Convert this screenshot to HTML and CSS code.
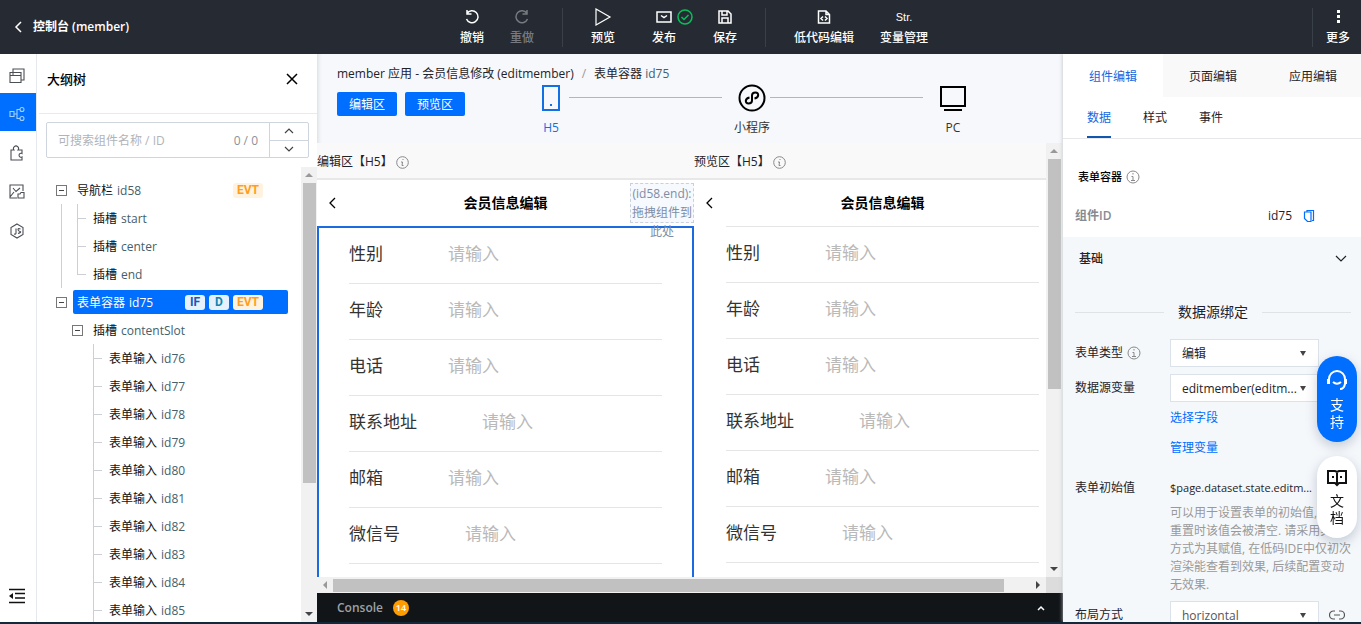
FILE: index.html
```html
<!DOCTYPE html>
<html lang="zh-CN">
<head>
<meta charset="utf-8">
<title>控制台 (member)</title>
<link rel="stylesheet" href="styles.css">
</head>
<body>
<header class="topbar">
  <a class="back" href="#"><svg width="8" height="12" viewBox="0 0 8 12"><path d="M7 1L2 6l5 5"/></svg>控制台 (member)</a>
  <nav class="tools">
    <div class="tool-group">
      <button class="tool"><svg width="16" height="16" viewBox="0 0 16 16"><path d="M3 4.500A6 6 0 1 1 2.500 10M3 1v4h4.500"/></svg>撤销</button>
      <button class="tool disabled"><svg width="16" height="16" viewBox="0 0 16 16"><path d="M13 4.500A6 6 0 1 0 13.500 10M13 1v4H8.500"/></svg>重做</button>
    </div>
    <div class="tool-group wide">
      <button class="tool"><svg width="18" height="18" viewBox="0 0 18 18"><path class="thin" d="M2 1v16l14-8z"/></svg>预览</button>
      <button class="tool"><svg width="16" height="16" viewBox="0 0 16 16"><path d="M1 3h14v10H1zM5 6.500l3 2 3-2"/></svg><svg class="ok" width="16" height="16" viewBox="0 0 16 16"><circle cx="8" cy="8" r="7"/><path d="M4.500 8l2.500 2.500 4.500-4.500"/></svg>发布</button>
      <button class="tool"><svg width="16" height="16" viewBox="0 0 16 16"><path d="M2 2h9l3 3v9H2zM5 2v4h5V2M5 14V9h6v5"/></svg>保存</button>
    </div>
    <div class="tool-group">
      <button class="tool"><svg width="16" height="16" viewBox="0 0 16 16"><path d="M2.500 2H10l3.500 3.500V14h-11zM10 2v3.500h3.500M7 7.500l-2 2 2 2M9 7.500l2 2-2 2"/></svg>低代码编辑</button>
      <button class="tool"><span class="glyph">Str.</span>变量管理</button>
    </div>
  </nav>
  <div class="more"><button class="tool"><svg width="16" height="16" viewBox="0 0 16 16"><g class="dots"><rect x="7" y="1" width="3" height="3"/><rect x="7" y="6" width="3" height="3"/><rect x="7" y="11" width="3" height="3"/></g></svg>更多</button></div>
</header>

<main class="workspace">
  <nav class="rail">
    <button aria-label="页面"><svg width="16" height="16" viewBox="0 0 16 16"><path d="M4 4V1h11v11h-3M1 4.500h11v10H1zM1 7.500h11M3 6h2"/></svg></button>
    <button class="active" aria-label="大纲树"><svg width="16" height="16" viewBox="0 0 16 16"><path d="M1 5.500h4v5H1zM5 8h3M11 3.500H8v9h3"/><circle cx="13" cy="3.500" r="2"/><circle cx="13" cy="12.500" r="2"/></svg></button>
    <button aria-label="组件"><svg width="16" height="16" viewBox="0 0 16 16"><path d="M2 15V5h3a2.500 2.500 0 1 1 4 0h4v3.500a2 2 0 1 0 0 3.500v3z"/></svg></button>
    <button aria-label="素材"><svg width="16" height="16" viewBox="0 0 16 16"><path d="M8 14H1V1h13v6M4 4l3 3.500L11 4M1 13l4-5M9 10h2l1-1.500h3V14H9z"/></svg></button>
    <button aria-label="脚本"><svg width="16" height="16" viewBox="0 0 16 16"><path d="M8 1l6 3.500v7L8 15l-6-3.500v-7zM7 5.500V10q0 1.500-2 1M11.500 6Q9 5 9 6.500T11 8.500 9 10.500"/></svg></button>
    <button class="collapse" aria-label="收起"><svg width="18" height="16" viewBox="0 0 18 16"><path d="M1 1.500h16M7 5.500h10M7 10h10M1 14.500h16"/><path class="solid" d="M5 5v6L1 8z"/></svg></button>
  </nav>

  <aside class="outline">
    <div class="outline-head"><h2>大纲树</h2><button aria-label="关闭"><svg width="12" height="12" viewBox="0 0 12 12"><path d="M1 1l10 10M11 1L1 11"/></svg></button></div>
    <div class="search">
      <input type="text" aria-label="搜索组件" placeholder="可搜索组件名称 / ID">
      <span class="count">0 / 0</span>
      <div class="stepper">
        <button aria-label="上一个"><svg width="10" height="6" viewBox="0 0 10 6"><path d="M1 5l4-4 4 4"/></svg></button>
        <button aria-label="下一个"><svg width="10" height="6" viewBox="0 0 10 6"><path d="M1 1l4 4 4-4"/></svg></button>
      </div>
    </div>
    <div class="tree-area">
      <ul class="tree">
        <li><div class="row"><button class="toggle" aria-label="折叠"></button><span class="node"><b>导航栏</b> id58<span class="tags"><i class="evt">EVT</i></span></span></div>
          <ul class="guided">
            <li class="row"><span class="twig"></span><span class="node"><b>插槽</b> start</span></li>
            <li class="row"><span class="twig"></span><span class="node"><b>插槽</b> center</span></li>
            <li class="row"><span class="twig end"></span><span class="node"><b>插槽</b> end</span></li>
          </ul>
        </li>
        <li><div class="row"><button class="toggle" aria-label="折叠"></button><span class="node selected"><b>表单容器</b> id75<span class="tags"><i class="if">IF</i><i class="data">D</i><i class="evt">EVT</i></span></span></div>
          <ul>
            <li><div class="row"><button class="toggle" aria-label="折叠"></button><span class="node"><b>插槽</b> contentSlot</span></div>
              <ul>
                <li class="row"><span class="twig"></span><span class="node"><b>表单输入</b> id76</span></li>
                <li class="row"><span class="twig"></span><span class="node"><b>表单输入</b> id77</span></li>
                <li class="row"><span class="twig"></span><span class="node"><b>表单输入</b> id78</span></li>
                <li class="row"><span class="twig"></span><span class="node"><b>表单输入</b> id79</span></li>
                <li class="row"><span class="twig"></span><span class="node"><b>表单输入</b> id80</span></li>
                <li class="row"><span class="twig"></span><span class="node"><b>表单输入</b> id81</span></li>
                <li class="row"><span class="twig"></span><span class="node"><b>表单输入</b> id82</span></li>
                <li class="row"><span class="twig"></span><span class="node"><b>表单输入</b> id83</span></li>
                <li class="row"><span class="twig"></span><span class="node"><b>表单输入</b> id84</span></li>
                <li class="row"><span class="twig"></span><span class="node"><b>表单输入</b> id85</span></li>
              </ul>
            </li>
          </ul>
        </li>
      </ul>
      <div class="vbar"><span class="arrow up dim"></span><span class="thumb"></span><span class="arrow down"></span></div>
    </div>
  </aside>

  <section class="stage">
    <div class="stage-head">
      <div class="crumbs"><span>member 应用 - 会员信息修改 (editmember)</span><span class="slash">/</span><span>表单容器 <em>id75</em></span></div>
      <div class="stage-tools">
        <button class="primary">编辑区</button>
        <button class="primary">预览区</button>
        <div class="steps">
          <button class="step current"><svg width="28" height="28" viewBox="0 0 28 28"><path d="M6 2h16v24H6z"/><path d="M13 21h2"/></svg>H5</button>
          <span class="link-line"></span>
          <button class="step"><svg width="28" height="28" viewBox="0 0 28 28"><circle cx="14" cy="14" r="12.500"/><path d="M11.500 13.500c-5 1-4.500 6-1 6 2.500 0 3.500-1.500 3.500-3v-5c0-1.500 1-3 3.500-3 3.500 0 4 5-1 6"/></svg>小程序</button>
          <span class="link-line"></span>
          <button class="step"><svg width="28" height="28" viewBox="0 0 28 28"><path d="M2 3h24v19H2zM5 26h18"/></svg>PC</button>
        </div>
      </div>
    </div>
    <div class="stage-body">
      <div class="canvas">
        <section class="pane">
          <h3>编辑区【H5】<svg class="info" width="13" height="13" viewBox="0 0 13 13"><circle cx="6.500" cy="6.500" r="5.800"/><path d="M7 3v1M5 6h1.500L6 9.500h1.500"/></svg></h3>
          <div class="phone-nav"><button aria-label="返回"><svg width="8" height="14" viewBox="0 0 8 14"><path d="M7 2L2 7l5 5"/></svg></button><strong>会员信息编辑</strong><div class="slot">(id58.end): 拖拽组件到此处</div></div>
          <form class="phone-form editing">
            <label>性别<input type="text" placeholder="请输入"></label>
            <label>年龄<input type="text" placeholder="请输入"></label>
            <label>电话<input type="text" placeholder="请输入"></label>
            <label>联系地址<input type="text" placeholder="请输入"></label>
            <label>邮箱<input type="text" placeholder="请输入"></label>
            <label>微信号<input type="text" placeholder="请输入"></label>
          </form>
        </section>
        <section class="pane">
          <h3>预览区【H5】<svg class="info" width="13" height="13" viewBox="0 0 13 13"><circle cx="6.500" cy="6.500" r="5.800"/><path d="M7 3v1M5 6h1.500L6 9.500h1.500"/></svg></h3>
          <div class="phone-nav"><button aria-label="返回"><svg width="8" height="14" viewBox="0 0 8 14"><path d="M7 2L2 7l5 5"/></svg></button><strong>会员信息编辑</strong></div>
          <form class="phone-form">
            <label>性别<input type="text" placeholder="请输入"></label>
            <label>年龄<input type="text" placeholder="请输入"></label>
            <label>电话<input type="text" placeholder="请输入"></label>
            <label>联系地址<input type="text" placeholder="请输入"></label>
            <label>邮箱<input type="text" placeholder="请输入"></label>
            <label>微信号<input type="text" placeholder="请输入"></label>
          </form>
        </section>
      </div>
      <div class="vbar"><span class="arrow up dim"></span><span class="thumb short"></span><span class="arrow down"></span></div>
      <div class="hbar"><span class="arrow left dim"></span><span class="thumb"></span><span class="arrow right"></span></div>
      <div class="corner"></div>
    </div>
    <div class="console"><span>Console</span><span class="badge">14</span><button aria-label="展开"><svg width="8" height="6" viewBox="0 0 8 6"><path d="M1 5l3-3 3 3"/></svg></button></div>
  </section>

  <aside class="props">
    <div class="main-tabs"><button class="active">组件编辑</button><button>页面编辑</button><button>应用编辑</button></div>
    <div class="sub-tabs"><button class="active">数据</button><button>样式</button><button>事件</button></div>
    <div class="component">
      <h2>表单容器<svg class="info" width="14" height="14" viewBox="0 0 14 14"><circle cx="7" cy="7" r="6"/><path d="M7 3v1.500M5.500 6.500H7V10M5 10.500h4"/></svg></h2>
      <div class="ident"><strong>组件ID</strong><span>id75</span><button aria-label="复制"><svg width="12" height="14" viewBox="0 0 12 14"><path d="M4 3V1.500h6.500v10H9M1.500 3H8v9.500H4.500l-3-3z"/></svg></button></div>
    </div>
    <div class="settings">
      <button class="fold">基础<svg width="12" height="8" viewBox="0 0 12 8"><path d="M1 1l5 5 5-5"/></svg></button>
      <div class="divider">数据源绑定</div>
      <div class="fields">
        <label class="name" for="type">表单类型<svg class="info" width="14" height="14" viewBox="0 0 14 14"><circle cx="7" cy="7" r="6"/><path d="M7 3v1.500M5.500 6.500H7V10M5 10.500h4"/></svg></label>
        <div class="pick"><select id="type"><option>编辑</option></select></div>
        <label class="name" for="source">数据源变量</label>
        <div class="pick"><select id="source"><option>editmember(editm...</option></select></div>
        <div class="links"><a href="#">选择字段</a><a href="#">管理变量</a></div>
        <span class="name">表单初始值</span>
        <span class="value">$page.dataset.state.editm...</span>
        <p class="help">可以用于设置表单的初始值, 表单<br>重置时该值会被清空. 请采用其他<br>方式为其赋值, 在低码IDE中仅初次<br>渲染能查看到效果, 后续配置变动<br>无效果.</p>
        <label class="name" for="layout">布局方式</label>
        <div class="with-link"><div class="pick"><select id="layout"><option>horizontal</option></select></div><button aria-label="绑定"><svg width="16" height="10" viewBox="0 0 16 10"><path d="M6 1H4.500a4 4 0 0 0 0 8H6M10 1h1.500a4 4 0 0 1 0 8H10M5 5h6"/></svg></button></div>
      </div>
    </div>
  </aside>
</main>

<div class="floats">
  <button class="support"><svg width="22" height="22" viewBox="0 0 22 22"><path d="M3 10a8 8 0 0 1 16 0v5q-1 5-5 5M7 13q4 3.500 8 0"/><path class="cups" d="M2.500 10v5M19.500 10v5"/></svg>支<br>持</button>
  <button class="docs"><svg width="20" height="18" viewBox="0 0 20 18"><path d="M10 3v12M1 2h7l2 1 2-1h7v12h-7l-2 2-2-2H1zM5 8h2M13 8h2"/></svg>文<br>档</button>
</div>
</body>
</html>
```
FILE: styles.css
```css
* { box-sizing: border-box; }
body {
  margin: 0; height: 100vh; overflow: hidden;
  display: flex; flex-direction: column;
  font: 12px/18px "Open Sans", "Noto Sans CJK SC", sans-serif;
  color: #1f2329; background: #fff;
  border-bottom: 2px solid #10293b;
}
button { font: inherit; color: inherit; background: none; border: 0; padding: 0; }
input, select { font: inherit; color: inherit; }
h2, h3, p, ul { margin: 0; padding: 0; }
ul { list-style: none; }
a { color: #006eff; text-decoration: none; }
svg { fill: none; stroke: currentColor; stroke-width: 1.5; flex: none; }

.topbar {
  flex: 0 0 54px; display: grid; grid-template-columns: 1fr auto 1fr; align-items: center;
  background: #262b33; color: #fff;
}
.back { display: flex; align-items: center; gap: 11px; padding-left: 14px; color: #fff; font-weight: 600; }
.tools { display: flex; margin-left: 27px; }
.tool-group { display: flex; gap: 26px; }
.tool-group.wide { gap: 37px; }
.tool-group + .tool-group { margin-left: 28px; padding-left: 28px; border-left: 1px solid #3a4048; }
.tool { position: relative; display: flex; flex-direction: column; align-items: center; gap: 3px; font-weight: 500; white-space: nowrap; }
.tool > svg:first-child, .glyph { height: 18px; }
.glyph { font: 11px/18px "Liberation Sans", sans-serif; }
.tool.disabled { color: #777b81; }
.tool .thin { stroke-width: 1.2; }
.tool .ok { position: absolute; left: 25px; top: 1px; color: #0abf5b; }
.dots { fill: #fff; stroke: none; }
.more { justify-self: end; padding: 0 11px 0 13px; border-left: 1px solid #3a4048; }

.workspace { flex: 1; min-height: 0; display: grid; grid-template-columns: 37px 280px minmax(0, 1fr) 298px; grid-template-rows: minmax(0, 1fr); }
.rail { display: flex; flex-direction: column; padding: 1px 0 9px; border-right: 1px solid #e5e8ed; color: #4b4f56; }
.rail button { height: 38px; margin-top: 1px; display: grid; place-items: center; padding: 3px 3px 0 0; }
.rail button:nth-child(-n+2) { margin-top: 0; }
.rail svg { stroke-width: 1.1; }
.rail .active { background: #006eff; color: #9fd0ff; }
.rail .collapse { margin-top: auto; color: #111; }
.rail .collapse svg { stroke-width: 1.5; }
.solid { fill: currentColor; stroke: none; }

.outline { display: flex; flex-direction: column; min-height: 0; }
.outline-head { flex: 0 0 60px; margin-left: 2px; padding: 0 19px 9px 8px; display: flex; align-items: center; justify-content: space-between; border-bottom: 1px solid #e8eaed; }
.outline-head h2 { font-size: 13px; font-weight: 500; color: #000; }
.outline-head button { display: flex; color: #000; }
.search { flex: 0 0 36px; margin: 8px 8px 9px 9px; display: flex; align-items: stretch; border: 1px solid #cfd5de; border-radius: 2px; color: #8b919b; }
.search input { flex: 1; min-width: 0; border: 0; padding: 2px 0 0 11px; outline: 0; background: none; }
.search input::placeholder { color: #b0b4ba; opacity: 1; }
.count { align-self: center; padding: 2px 11px 0 0; }
.stepper { flex: 0 0 39px; display: grid; border-left: 1px solid #cfd5de; color: #444; }
.stepper button { display: grid; place-items: center; }
.stepper button + button { border-top: 1px solid #cfd5de; }
.stepper svg { stroke-width: 1.2; }

.tree-area { flex: 1; min-height: 0; display: flex; }
.tree { flex: 1; padding: 9px 13px 0 18px; overflow: hidden; }
.tree ul { padding-left: 16px; }
.guided { background: linear-gradient(#ccd0d6, #ccd0d6) 6px 0 / 1px 100% no-repeat; }
.row { display: flex; align-items: center; height: 28px; }
.toggle { width: 11px; height: 11px; margin: 0 6px 0 1px; border: 1px solid #777; background: linear-gradient(#444, #444) center / 5px 1px no-repeat; }
.twig { width: 18px; height: 28px; background: linear-gradient(#ccd0d6, #ccd0d6) 6px 0 / 1px 100% no-repeat, linear-gradient(#ccd0d6, #ccd0d6) 6px 14px / 9px 1px no-repeat; }
.twig.end { background-size: 1px 14px, 9px 1px; }
.node { flex: 1; display: flex; align-items: center; gap: 4px; height: 24px; padding: 2px 25px 0 4px; border-radius: 2px; color: #45606a; white-space: nowrap; }
.node b { font-weight: 400; color: #111; }
.node.selected { background: #006eff; }
.node.selected, .node.selected b { color: #fff; }
.tags { margin: -2px 0 0 auto; display: flex; gap: 4px; }
.tags i { font: bold 12px/15px Roboto, sans-serif; padding: 0 3px; border-radius: 3px; min-width: 20px; text-align: center; background: #e5f1fb; }
.tags .evt { color: #ff9d1f; background: #fff3e0; min-width: 30px; }
.tags .if { color: #1b57b8; }
.tags .data { color: #0b86b5; }

.vbar { width: 16px; display: flex; flex-direction: column; align-items: center; background: #f1f1f1; }
.hbar { height: 16px; display: flex; align-items: center; background: #f1f1f1; }
.arrow { flex: none; width: 16px; height: 16px; display: grid; place-items: center; color: #444; }
.arrow.dim { color: #999; }
.arrow::before { content: ""; border: 4px solid transparent; }
.up::before { border-top-width: 0; border-bottom-color: currentColor; }
.down::before { border-bottom-width: 0; border-top-color: currentColor; }
.left::before { border-left-width: 0; border-right-color: currentColor; }
.right::before { border-right-width: 0; border-left-color: currentColor; }
.vbar .thumb { width: 13px; height: 66%; background: #c1c1c1; }
.vbar .thumb.short { height: 53%; }
.vbar .down { margin-top: auto; }
.hbar .thumb { width: 92%; height: 13px; background: #c1c1c1; }
.hbar .right { margin-left: auto; }

.stage { display: flex; flex-direction: column; min-width: 0; min-height: 0; background: #f9fafb; }
.stage-head { flex: none; padding: 11px 92px 0 20px; background: #f6f8fb; box-shadow: inset 5px 0 5px -5px #c7cbd1; }
.crumbs { display: flex; padding-bottom: 1px; }
.crumbs em { font-style: normal; color: #45606a; }
.slash { padding: 0 8px; color: #999; }
.stage-tools { display: flex; align-items: flex-start; gap: 8px; height: 59px; }
.primary { width: 60px; height: 24px; margin-top: 8px; padding-top: 2px; background: #006eff; color: #fff; border-radius: 2px; }
.steps { flex: 1; display: flex; margin-left: 60px; }
.step { width: 36px; display: flex; flex-direction: column; align-items: center; gap: 7px; color: #333; white-space: nowrap; }
.step svg { color: #000; stroke-width: 2; }
.step.current, .step.current svg { color: #1170e4; }
.link-line { flex: 1; height: 1px; margin: 13px 12px 0 0; background: #b3b7bc; }

.stage-body { flex: 1; min-height: 0; display: grid; grid-template-columns: minmax(0, 1fr) 16px; grid-template-rows: minmax(0, 1fr) 16px; padding-right: 1px; }
.canvas { display: flex; overflow: hidden; background: #f9f9f9; }
.pane { flex: 0 0 377px; min-width: 0; display: flex; flex-direction: column; }
.pane h3 { flex: none; height: 37px; padding-top: 3px; display: flex; align-items: center; gap: 3px; font-size: 12px; font-weight: 400; border-bottom: 2px solid #e8e8e8; }
.info { color: #888; stroke-width: 1; }
.phone-nav { flex: 0 0 46px; display: grid; grid-template-columns: 64px 1fr 64px; align-items: center; background: #fff; color: #000; }
.phone-nav button { display: flex; padding-left: 11px; }
.phone-nav strong { font-size: 14px; font-weight: 700; text-align: center; }
.phone-nav svg { stroke-width: 1.3; }
.slot { height: 40px; border: 1px dashed #c9d0da; background: #f6f9fd; color: #7e8da6; line-height: 19px; text-align: center; z-index: 1; }
.phone-form { flex: 1; min-width: 0; padding: 0 32px; background: #fff; font-size: 17px; color: #333; }
.phone-form::before { content: ""; display: block; height: 1px; background: #e5e5e5; }
.phone-form.editing { padding: 0 30px; border: 2px solid #1b6ae0; border-bottom: 0; }
.phone-form.editing::before { display: none; }
.phone-form label { display: flex; align-items: center; gap: 65px; height: 56px; border-bottom: 1px solid #e5e5e5; padding-bottom: 4px; line-height: 24px; white-space: nowrap; }
.phone-form input { flex: 1; min-width: 0; width: 0; border: 0; padding: 0; outline: 0; background: none; }
.phone-form input::placeholder { color: #b9b9b9; opacity: 1; }
.corner { background: #dcdcdc; }

.console { flex: 0 0 29px; display: flex; align-items: center; gap: 10px; padding: 0 18px 0 20px; background: #111518; color: #9da1a6; font-weight: 600; }
.badge { width: 16px; height: 16px; border-radius: 8px; background: #ff9d00; color: #fff; font-size: 9px; line-height: 16px; text-align: center; }
.console button { margin-left: auto; display: flex; color: #fff; }

.props { display: flex; flex-direction: column; min-width: 0; overflow: hidden; background: #fff; box-shadow: 0 0 4px #b8bcc2; clip-path: inset(0 0 0 -5px); }
.main-tabs { flex: 0 0 43px; display: flex; margin-right: -2px; }
.main-tabs button { flex: 1; padding-top: 2px; background: #f9f9f9; }
.main-tabs .active { background: #fff; color: #1268e0; }
.sub-tabs { flex: 0 0 42px; display: flex; gap: 32px; padding-left: 24px; border-bottom: 1px solid #e6e8eb; }
.sub-tabs button { padding-top: 2px; border-bottom: 2px solid transparent; }
.sub-tabs .active { color: #1268e0; border-bottom-color: #1157b0; }
.component { flex: 0 0 98px; padding: 28px 12px 0; }
.component h2 { display: flex; align-items: center; gap: 4px; padding-left: 3px; font-size: 11px; font-weight: 500; line-height: 20px; color: #000; }
.ident { display: flex; align-items: center; gap: 11px; margin-top: 20px; padding-right: 34px; }
.ident strong { flex: 1; color: #868b93; font-weight: 600; }
.ident button { display: flex; color: #006eff; }
.ident svg { stroke-width: 1.2; }
.settings { flex: 1; min-height: 0; padding: 13px 10px 0 12px; background: #f5f8fb; overflow: hidden; }
.fold { width: 100%; display: flex; align-items: center; justify-content: space-between; padding: 0 4px; font-weight: 500; }
.fold svg { stroke-width: 1.2; }
.divider { display: flex; align-items: center; gap: 14px; margin: 34px 0 17px; font-size: 14px; line-height: 20px; }
.divider::before, .divider::after { content: ""; flex: 1; height: 1px; background: #dfe3e8; }
.fields { display: grid; grid-template-columns: 95px minmax(0, 1fr); }
.name { grid-column: 1; display: flex; align-items: center; gap: 4px; height: 28px; }
.pick { position: relative; width: 149px; margin-bottom: 7px; }
.pick::after { content: ""; position: absolute; right: 13px; top: 12px; border: 3px solid transparent; border-top: 5px solid #444; border-bottom: 0; }
.pick select { appearance: none; display: block; width: 100%; height: 28px; padding: 2px 0 0 11px; border: 1px solid #dbe2ea; border-radius: 0; background: #fff; }
.links { grid-column: 2; display: flex; flex-direction: column; gap: 12px; margin-bottom: 17px; }
.value { font-size: 11px; line-height: 28px; white-space: nowrap; }
.help { grid-column: 2; margin: 2px 0 7px; color: #999; white-space: nowrap; }
.with-link { display: flex; gap: 10px; align-items: flex-start; color: #555; }
.with-link button { height: 28px; display: flex; align-items: center; }
.with-link svg { stroke-width: 1.2; }

.floats { position: fixed; right: 4px; top: 356px; display: flex; flex-direction: column; gap: 14px; }
.floats button { width: 40px; padding: 13px 0 12px; display: block; border-radius: 20px; font-size: 14px; line-height: 17px; box-shadow: 0 4px 12px rgba(40, 60, 100, .25); }
.floats svg { display: block; margin: 0 auto 5px; stroke-width: 2; }
.cups { stroke-width: 3; }
.support { background: #006eff; color: #fff; }
.docs { background: #fff; color: #111; }
```
